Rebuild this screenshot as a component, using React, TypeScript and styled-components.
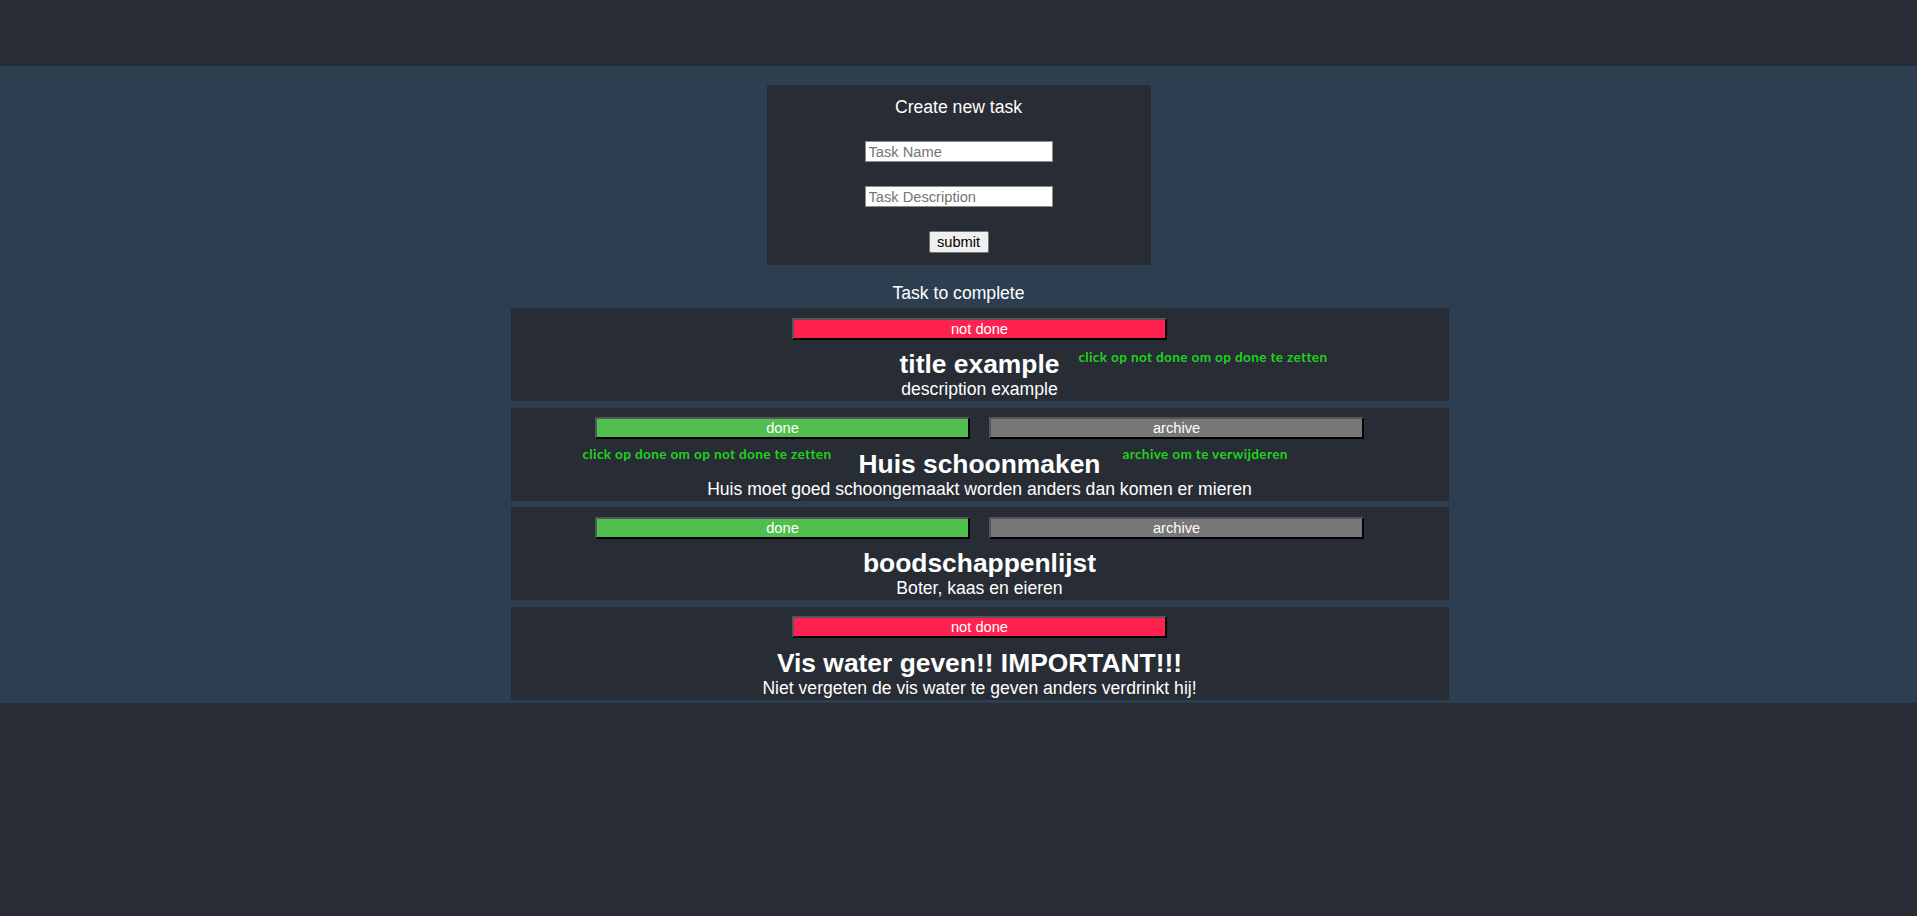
import React from "react";
import styled, { createGlobalStyle } from "styled-components";

const Global = createGlobalStyle`
  html, body { margin: 0; padding: 0; background: #282c34; }
  body { font-family: "Liberation Sans", Arial, sans-serif; color: #fff; }
  * { box-sizing: border-box; }
`;

const Header = styled.header`
  height: 66px;
  background: #282c34;
`;

const Main = styled.main`
  background: #2c3e50;
  padding: 19px 0 3px;
  display: flex;
  flex-direction: column;
  align-items: center;
`;

const FormBox = styled.form`
  width: 384px;
  background: #282c34;
  padding: 12px 0;
  display: flex;
  flex-direction: column;
  align-items: center;
  gap: 24px;
`;

const FormTitle = styled.div`
  font-size: 17.6px;
  line-height: 20px;
  color: #fff;
`;

const Input = styled.input`
  width: 188px;
  height: 21px;
  padding: 1px 3px;
  border: 1px solid #8a8a8a;
  background: #fff;
  font-family: "Liberation Sans", Arial, sans-serif;
  font-size: 14.67px;
  color: #000;
  outline: none;
  &::placeholder { color: #757575; }
`;

const SubmitButton = styled.button`
  width: 60px;
  height: 22px;
  padding: 0 6px;
  border: 1px solid #767676;
  border-radius: 2px;
  background: #efefef;
  color: #000;
  font-family: "Liberation Sans", Arial, sans-serif;
  font-size: 14.67px;
`;

const SectionTitle = styled.div`
  margin-top: 18px;
  font-size: 17.6px;
  line-height: 20px;
  color: #fff;
`;

const TaskList = styled.div`
  width: 938px;
  margin: 5px 0 0 calc(50% - 448px);
  align-self: flex-start;
  display: flex;
  flex-direction: column;
  gap: 6.5px;
`;

const Card = styled.div`
  height: 93px;
  background: #282c34;
  padding-top: 9.5px;
  display: flex;
  flex-direction: column;
  align-items: center;
`;

const ButtonRow = styled.div`
  display: flex;
  justify-content: center;
  gap: 19px;
`;

const colors: Record<string, string> = {
  red: "#ff214f",
  green: "#50bf50",
  grey: "#777777",
};

const StatusButton = styled.button<{ $tone: string }>`
  width: 375px;
  height: 22px;
  padding: 0;
  background: ${(p) => colors[p.$tone]};
  color: #fff;
  font-family: "Liberation Sans", Arial, sans-serif;
  font-size: 14.67px;
  line-height: 18px;
  border-style: solid;
  border-width: 2px;
  border-color: #555 #000 #000 #555;
  cursor: pointer;
`;

const TitleWrap = styled.div`
  position: relative;
  margin-top: 9.5px;
`;

const Title = styled.h2`
  margin: 0;
  font-size: 26.4px;
  line-height: 30px;
  font-weight: bold;
  color: #fff;
  white-space: nowrap;
`;

const Hint = styled.span<{ $side: "left" | "right"; $gap: number; $top: number }>`
  position: absolute;
  top: ${(p) => p.$top}px;
  ${(p) => (p.$side === "right" ? "left" : "right")}: calc(100% + ${(p) => p.$gap}px);
  font-family: Lato, "Open Sans", sans-serif;
  font-weight: bold;
  font-size: 13.6px;
  line-height: 16px;
  letter-spacing: 0.35px;
  color: #1fd11f;
  white-space: nowrap;
`;

const Description = styled.div`
  font-size: 17.6px;
  line-height: 20px;
  color: #fff;
`;

type HintData = { text: string; side: "left" | "right"; gap: number; top: number };
type Task = {
  title: string;
  description: string;
  done: boolean;
  hints?: HintData[];
};

const tasks: Task[] = [
  {
    title: "title example",
    description: "description example",
    done: false,
    hints: [{ text: "click op not done om op done te zetten", side: "right", gap: 19, top: 0 }],
  },
  {
    title: "Huis schoonmaken",
    description: "Huis moet goed schoongemaakt worden anders dan komen er mieren",
    done: true,
    hints: [
      { text: "click op done om op not done te zetten", side: "left", gap: 27, top: -3 },
      { text: "archive om te verwijderen", side: "right", gap: 22, top: -3 },
    ],
  },
  {
    title: "boodschappenlijst",
    description: "Boter, kaas en eieren",
    done: true,
  },
  {
    title: "Vis water geven!! IMPORTANT!!!",
    description: "Niet vergeten de vis water te geven anders verdrinkt hij!",
    done: false,
  },
];

export default function App() {
  return (
    <>
      <Global />
      <Header />
      <Main>
        <FormBox onSubmit={(e) => e.preventDefault()}>
          <FormTitle>Create new task</FormTitle>
          <Input placeholder="Task Name" />
          <Input placeholder="Task Description" />
          <SubmitButton type="submit">submit</SubmitButton>
        </FormBox>
        <SectionTitle>Task to complete</SectionTitle>
        <TaskList>
          {tasks.map((t) => (
            <Card key={t.title}>
              <ButtonRow>
                {t.done ? (
                  <>
                    <StatusButton $tone="green">done</StatusButton>
                    <StatusButton $tone="grey">archive</StatusButton>
                  </>
                ) : (
                  <StatusButton $tone="red">not done</StatusButton>
                )}
              </ButtonRow>
              <TitleWrap>
                <Title>{t.title}</Title>
                {t.hints?.map((h) => (
                  <Hint key={h.text} $side={h.side} $gap={h.gap} $top={h.top}>
                    {h.text}
                  </Hint>
                ))}
              </TitleWrap>
              <Description>{t.description}</Description>
            </Card>
          ))}
        </TaskList>
      </Main>
    </>
  );
}
